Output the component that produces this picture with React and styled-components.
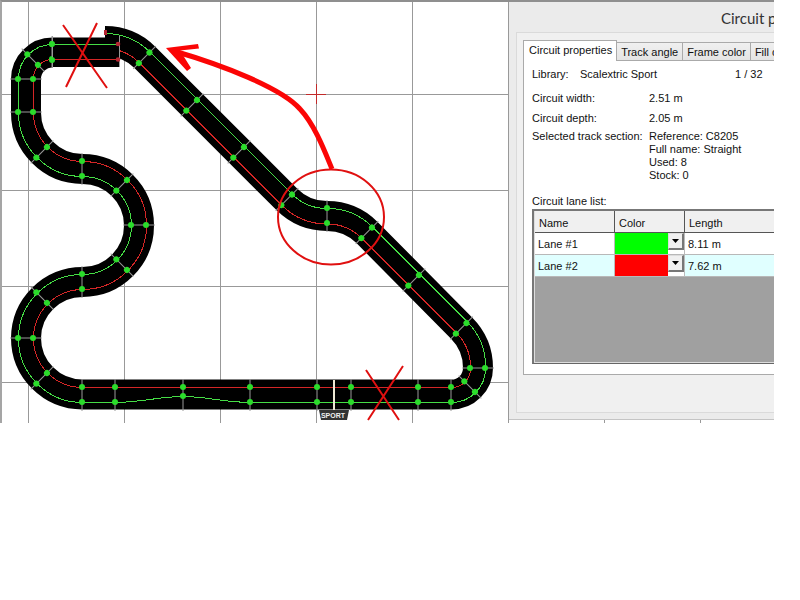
import React, { useState } from 'react';
import styled, { createGlobalStyle } from 'styled-components';

const GlobalStyle = createGlobalStyle`
  *, *::before, *::after {
    box-sizing: border-box;
  }

  body {
    margin: 0;
    background: #fff;
    color: #111;
    font-family: 'Liberation Sans', Arial, sans-serif;
    font-size: 11px;
    line-height: 16px;
  }
`;

const Workspace = styled.main`
  display: grid;
  grid-template-columns: minmax(0, 507px) minmax(0, 1fr);
  align-items: start;
  margin-right: 26px;
  overflow: hidden;
  border-top: 2px solid #8f8f8f;
  border-left: 2px solid #a5a5a5;
  background-color: #fff;
  background-image:
    linear-gradient(to right, #999 1px, transparent 1px),
    linear-gradient(to bottom, #999 1px, transparent 1px);
  background-size: 96px 96px;
  background-position: 26px 92px;
`;

const Drawing = styled.svg`
  display: block;
  width: 100%;
  height: auto;
`;

const Dialog = styled.section`
  min-width: 0;
  overflow: hidden;
  padding: 0 0 6px 7px;
  border-bottom: 1px solid #c4c4c4;
  background: #ebebeb;
  white-space: nowrap;
`;

const DialogTitle = styled.h1`
  margin: 0;
  padding: 5px 0 3px 205px;
  color: #333;
  font: 400 15px/22px Lato, 'Open Sans', sans-serif;
`;

const DialogBody = styled.div`
  padding: 7px 0 37px 6px;
  border: 1px solid #dadada;
  border-right: 0;
  background: #f0f0f0;
`;

const TabList = styled.div`
  display: flex;
  align-items: flex-end;
`;

const Tab = styled.button`
  flex: none;
  position: relative;
  height: ${({ $active }) => ($active ? '21px' : '18px')};
  margin-bottom: ${({ $active }) => ($active ? '-1px' : '0')};
  padding: ${({ $active }) => ($active ? '0 4px 2px 5px' : '0 4px')};
  border: 1px solid #aaa;
  border-bottom: 0;
  border-left-width: ${({ $active }) => ($active ? '1px' : '0')};
  background: ${({ $active }) => ($active ? '#fff' : 'linear-gradient(#f0f0f0, #e4e4e4)')};
  color: inherit;
  font: inherit;
`;

const TabPanel = styled.div`
  padding: 5px 0 10px 8px;
  border: 1px solid #aaa;
  border-right: 0;
  background: #fff;
`;

const LibraryRow = styled.div`
  display: grid;
  grid-template-columns: 48px 155px auto;
  margin-bottom: 8px;
`;

const Details = styled.dl`
  display: grid;
  grid-template-columns: 117px 1fr;
  row-gap: 4px;
  margin: 0 0 11px;

  dt, dd {
    margin: 0;
  }
`;

const SectionLabel = styled.dt`
  line-height: 13px;
`;

const SectionValue = styled.dd`
  line-height: 13px;
`;

const ListFrame = styled.div`
  height: 155px;
  border: 2px solid #777;
  border-right: 0;
  border-bottom: 1px solid #666;
  background: #a0a0a0;
  box-shadow: inset 1px -1px #ddd;
  overflow: hidden;
`;

const LaneTable = styled.table`
  width: calc(100% - 1px);
  margin-left: 1px;
  border-collapse: separate;
  border-spacing: 0;
  table-layout: fixed;
  font-size: 11px;

  th:last-child, td:last-child {
    border-right: 0;
  }
`;

const HeaderCell = styled.th`
  width: ${({ $width }) => $width || 'auto'};
  height: 22px;
  padding: 2px 4px 0;
  border-right: 1px solid #555;
  border-bottom: 1px solid #555;
  background: #f0f0f0;
  font-weight: 400;
  text-align: left;
`;

const LaneRow = styled.tr`
  background: ${({ $selected }) => ($selected ? '#e0ffff' : '#fff')};
`;

const LaneCell = styled.td`
  height: 22px;
  padding: ${({ $flush }) => ($flush ? '0' : '1px 3px 0')};
  border-right: 1px solid #bbb;
  border-bottom: 1px solid #b8b8b8;
`;

const ColorPicker = styled.div`
  position: relative;
  height: 21px;
  background: #fff;
`;

const ColorSelect = styled.select`
  display: block;
  appearance: none;
  width: 100%;
  height: 21px;
  padding: 0;
  border: 0;
  border-right: 16px solid #fff;
  border-radius: 0;
  background: ${({ $color }) => $color};
  color: transparent;
  font-size: 11px;
`;

const DropArrow = styled.span`
  position: absolute;
  top: 0;
  right: 0;
  display: grid;
  place-items: center;
  width: 16px;
  height: 17px;
  border: 1px solid #ddd;
  border-right: 2px solid #777;
  border-bottom: 2px solid #777;
  background: #f0f0f0;
  pointer-events: none;
`;

const GREEN = '#45dd45';
const RED = '#d42626';

// x, y and direction of the cut between two track pieces, in degrees
const joints = [
  [52, 52, 90],
  [33, 60, 45],
  [26, 79, 0],
  [26, 112, 0],
  [42, 152, -45],
  [82, 169, 90],
  [122, 185, -45],
  [139, 225, 0],
  [122, 265, 45],
  [82, 282, 90],
  [42, 298, 45],
  [26, 338, 0],
  [42, 378, -45],
  [82, 395, 90],
  [115, 395, 90],
  [183, 395, 90],
  [250, 395, 90],
  [317, 395, 90],
  [351, 395, 90],
  [418, 395, 90],
  [451, 395, 90],
  [470, 387, 45],
  [478, 368, 0],
  [461.5, 328, -45],
  [414, 280, -45],
  [367, 232.5, -45],
  [327, 216, 90],
  [287, 199.5, -45],
  [239, 152, -45],
  [192, 105, -45],
  [144.5, 57.5, -45],
];

const lanes = [
  { id: 1, name: 'Lane #1', color: '#00ff00', length: '8.11 m' },
  { id: 2, name: 'Lane #2', color: '#ff0000', length: '7.62 m' },
];

const tabs = ['Circuit properties', 'Track angle', 'Frame color', 'Fill color'];

const Joint = ({ x, y, angle }) => {
  // the lanes come closer on the narrowed straight
  const outer = x === 183 ? 1 : 7;
  return (
    <g transform={`translate(${x} ${y}) rotate(${angle})`}>
      <path d="M-16 0H16" stroke="#999" />
      <circle cx={-8} r="3" fill="#2bdc2b" />
      <circle cx={outer} r="3" fill="#2bdc2b" />
    </g>
  );
};

const Circuit = () => (
  <Drawing viewBox="2 2 507 421" role="img" aria-label="Circuit">
    <g fill="none" stroke="#000" strokeWidth="30">
      <path d="M105 41A56.5 56.5 0 0 1 145 57.5L287 199.5A56.5 56.5 0 0 0 327 216A56.5 56.5 0 0 1 367 232.5L461.5 328A56.5 56.5 0 0 1 478 368A26.5 26.5 0 0 1 451.5 394.5H82.5A56.5 56.5 0 0 1 26 338A56.5 56.5 0 0 1 82.5 282A56.5 56.5 0 0 0 139 225A56.5 56.5 0 0 0 82.5 169A56.5 56.5 0 0 1 26 112V79A26.5 26.5 0 0 1 52.5 52.5" />
    </g>
    <g fill="none" shapeRendering="crispEdges">
      <path stroke={GREEN} d="M105 33.5A64 64 0 0 1 150 52L292 194A49 49 0 0 0 327 208.5A64 64 0 0 1 372.5 227L467.5 322A64 64 0 0 1 485.5 368A34 34 0 0 1 451.5 402.5H250C220 402 208 396.5 183 396.5S146 402 115 402.5H82.5A64 64 0 0 1 18.5 338A64 64 0 0 1 82.5 274.5A49 49 0 0 0 131.5 225A49 49 0 0 0 82.5 176.5A64 64 0 0 1 18.5 112.5V79A34 34 0 0 1 52.5 44.5" />
      <path stroke={RED} d="M105 48.5A49 49 0 0 1 139.5 63L281.5 205A64 64 0 0 0 327 224A49 49 0 0 1 361.5 238L456.5 333A49 49 0 0 1 470.5 368A19 19 0 0 1 451.5 387.5H82.5A49 49 0 0 1 33.5 338A49 49 0 0 1 82.5 289.5A64 64 0 0 0 146.5 225A64 64 0 0 0 82.5 161.5A49 49 0 0 1 33.5 112.5V79A19 19 0 0 1 52.5 59.5" />
    </g>
    {joints.map(([x, y, angle]) => (
      <Joint key={`${x}-${y}`} x={x} y={y} angle={angle} />
    ))}

    {/* open end of the upper straight */}
    <path d="M52 37.5H120V67H52Z" />
    <path d="M52.5 44.5H119" stroke={GREEN} />
    <path d="M52.5 59.5H119" stroke={RED} />
    <path d="M52.5 36V68M119.5 36V67" stroke="#999" />
    <path d="M104 30h3v5h-3z" fill="#b52632" />
    <circle cx="52" cy="44" r="3" fill="#2bdc2b" />
    <circle cx="52" cy="60" r="3" fill="#2bdc2b" />
    <circle cx="118" cy="44" r="2.3" fill="#b52632" />
    <circle cx="118" cy="59.5" r="2.3" fill="#b52632" />

    {/* start line */}
    <path d="M334 380V410" stroke="#eee8d5" strokeWidth="2" />
    <path d="M319 410H349L347 420H321Z" fill="#333" />
    <text
      x="333"
      y="418"
      fill="#eee"
      fontFamily="Liberation Sans, sans-serif"
      fontSize="7"
      fontWeight="700"
      textAnchor="middle"
    >
      SPORT
    </text>

    {/* annotations */}
    <path d="M306 94.5H326M316.5 84V104" stroke="#c22a2a" />
    <g fill="none" stroke="#e01010" strokeWidth="2">
      <path d="M63 25L107 88M97 23L66 87M366 370L399 420M403 366L368 420" />
      <ellipse cx="331" cy="217" rx="53" ry="47.5" />
    </g>
    <path
      d="M332 169C325 152 315 125 300 109C282 88 222 65 174 51"
      fill="none"
      stroke="#fb0505"
      strokeWidth="5"
    />
    <path d="M166 48L198 44L199 48.5L180 50.5L191 68L187 71Z" fill="#fb0505" />
  </Drawing>
);

const LaneList = () => {
  const [colors, setColors] = useState(lanes.map((lane) => lane.color));

  const changeColor = (index, color) => {
    setColors(colors.map((item, i) => (i === index ? color : item)));
  };

  return (
    <ListFrame>
      <LaneTable aria-labelledby="lane-list">
        <thead>
          <tr>
            <HeaderCell $width="80px">Name</HeaderCell>
            <HeaderCell $width="70px">Color</HeaderCell>
            <HeaderCell>Length</HeaderCell>
          </tr>
        </thead>
        <tbody>
          {lanes.map((lane, index) => (
            <LaneRow key={lane.id} $selected={lane.id === 2}>
              <LaneCell>{lane.name}</LaneCell>
              <LaneCell $flush>
                <ColorPicker>
                  <ColorSelect
                    aria-label={`${lane.name} color`}
                    $color={colors[index]}
                    value={colors[index]}
                    onChange={(e) => changeColor(index, e.target.value)}
                  >
                    <option value="#00ff00" aria-label="Green" />
                    <option value="#ff0000" aria-label="Red" />
                  </ColorSelect>
                  <DropArrow>
                    <svg width="7" height="4" viewBox="0 0 7 4" aria-hidden="true">
                      <path d="M0 0H7L3.5 4Z" />
                    </svg>
                  </DropArrow>
                </ColorPicker>
              </LaneCell>
              <LaneCell>{lane.length}</LaneCell>
            </LaneRow>
          ))}
        </tbody>
      </LaneTable>
    </ListFrame>
  );
};

const PropertiesDialog = () => (
  <Dialog aria-labelledby="dialog-title">
    <DialogTitle id="dialog-title">Circuit properties</DialogTitle>
    <DialogBody>
      <TabList role="tablist">
        {tabs.map((tab, index) => (
          <Tab
            key={tab}
            type="button"
            role="tab"
            aria-selected={index === 0}
            $active={index === 0}
          >
            {tab}
          </Tab>
        ))}
      </TabList>
      <TabPanel role="tabpanel">
        <LibraryRow>
          <span>Library:</span>
          <span>Scalextric Sport</span>
          <span>1 / 32</span>
        </LibraryRow>
        <Details>
          <dt>Circuit width:</dt>
          <dd>2.51 m</dd>
          <dt>Circuit depth:</dt>
          <dd>2.05 m</dd>
          <SectionLabel>Selected track section:</SectionLabel>
          <SectionValue>
            <div>Reference: C8205</div>
            <div>Full name: Straight</div>
            <div>Used: 8</div>
            <div>Stock: 0</div>
          </SectionValue>
        </Details>
        <div id="lane-list">Circuit lane list:</div>
        <LaneList />
      </TabPanel>
    </DialogBody>
  </Dialog>
);

const App = () => (
  <>
    <GlobalStyle />
    <Workspace>
      <Circuit />
      <PropertiesDialog />
    </Workspace>
  </>
);

export default App;
